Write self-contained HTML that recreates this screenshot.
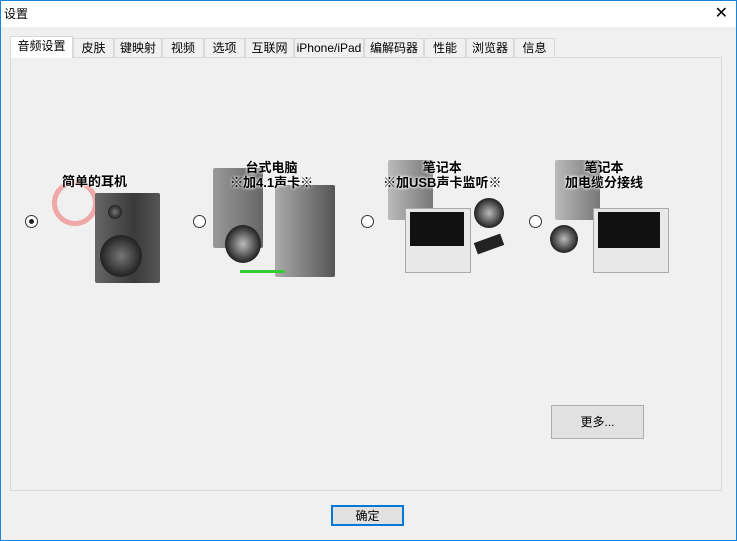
<!DOCTYPE html>
<html><head><meta charset="utf-8"><style>
body{margin:0;width:737px;height:541px;background:#f0f0f0;font-family:"Liberation Sans","Noto Sans CJK SC",sans-serif;font-size:12px;position:relative;overflow:hidden}
.title{position:absolute;left:0;top:0;width:737px;height:27px;background:#fff}
.title span{position:absolute;left:4px;top:5px;font-size:12px}
.close{position:absolute;right:9px;top:3px;font-size:16px}
.border{position:absolute;left:0;top:0;width:735px;height:539px;border:1px solid #1883d7;border-top:1px solid #1883d7;pointer-events:none}
.tab{position:absolute;top:38px;height:19px;border:1px solid #d9d9d9;border-bottom:none;background:#f0f0f0;line-height:19px;text-align:center;box-sizing:border-box;font-size:12px;color:#000}
.tab.sel{top:36px;height:22px;background:#fff;border-color:#d9d9d9;z-index:2}
.panel{position:absolute;left:10px;top:57px;width:712px;height:434px;border:1px solid #d9d9d9;box-sizing:border-box;background:#f0f0f0}
.radio{position:absolute;width:11px;height:11px;border:1px solid #333;border-radius:50%;background:#fff}
.radio.on::after{content:"";position:absolute;left:3px;top:3px;width:5px;height:5px;border-radius:50%;background:#222}
.img{position:absolute}
.spk{position:absolute;background:linear-gradient(90deg,#666,#3a3a3a 60%,#555);border-radius:2px}
.woof{position:absolute;border-radius:50%;background:radial-gradient(#777,#222 70%)}
.lbl{position:absolute;font-weight:bold;font-size:13px;text-align:center;color:#000;text-shadow:0 0 3px #fff,0 0 3px #fff;white-space:nowrap}
.lap{position:absolute;background:#e8e8e8;border:1px solid #aaa}
.scr{position:absolute;background:#111}
.btn{position:absolute;border:1px solid #adadad;background:#e1e1e1;text-align:center;box-sizing:border-box}
</style></head><body>
<div class="title"><span>设置</span><div class="close">✕</div></div>
<div class="tab sel" style="left:10px;width:63px">音频设置</div>
<div class="tab" style="left:73px;width:41px">皮肤</div>
<div class="tab" style="left:114px;width:48px">键映射</div>
<div class="tab" style="left:162px;width:42px">视频</div>
<div class="tab" style="left:204px;width:41px">选项</div>
<div class="tab" style="left:245px;width:49px">互联网</div>
<div class="tab" style="left:294px;width:70px">iPhone/iPad</div>
<div class="tab" style="left:364px;width:60px">编解码器</div>
<div class="tab" style="left:424px;width:42px">性能</div>
<div class="tab" style="left:466px;width:48px">浏览器</div>
<div class="tab" style="left:514px;width:41px">信息</div>
<div class="panel"></div>

<div class="radio on" style="left:25px;top:215px"></div>
<div class="radio" style="left:193px;top:215px"></div>
<div class="radio" style="left:361px;top:215px"></div>
<div class="radio" style="left:529px;top:215px"></div>

<!-- image 1 -->
<div style="position:absolute;left:52px;top:180px;width:36px;height:36px;border:5px solid #e88;border-radius:50%;opacity:.7"></div>
<div class="spk" style="left:95px;top:193px;width:65px;height:90px"></div>
<div class="woof" style="left:100px;top:235px;width:42px;height:42px"></div>
<div class="woof" style="left:108px;top:205px;width:14px;height:14px"></div>
<div class="lbl" style="left:62px;top:171px">简单的耳机</div>

<!-- image 2 -->
<div class="spk" style="left:213px;top:168px;width:50px;height:80px;background:linear-gradient(90deg,#999,#666)"></div>
<div class="spk" style="left:275px;top:185px;width:60px;height:92px;background:linear-gradient(90deg,#aaa,#555)"></div>
<div class="woof" style="left:225px;top:225px;width:36px;height:38px;background:radial-gradient(#bbb,#222 70%)"></div>
<div style="position:absolute;left:240px;top:270px;width:45px;height:3px;background:#3c3"></div>
<div class="lbl" style="left:230px;top:160px;line-height:15px">台式电脑<br>※加4.1声卡※</div>

<!-- image 3 -->
<div class="spk" style="left:388px;top:160px;width:45px;height:60px;background:linear-gradient(90deg,#bbb,#777)"></div>
<div class="lap" style="left:405px;top:208px;width:64px;height:63px"></div>
<div class="scr" style="left:410px;top:212px;width:54px;height:34px"></div>
<div class="woof" style="left:474px;top:198px;width:30px;height:30px;background:radial-gradient(#bbb,#222 70%)"></div>
<div style="position:absolute;left:475px;top:238px;width:28px;height:12px;background:#222;transform:rotate(-20deg)"></div>
<div class="lbl" style="left:383px;top:160px;line-height:15px">笔记本<br>※加USB声卡监听※</div>

<!-- image 4 -->
<div class="spk" style="left:555px;top:160px;width:45px;height:60px;background:linear-gradient(90deg,#bbb,#777)"></div>
<div class="lap" style="left:593px;top:208px;width:74px;height:63px"></div>
<div class="scr" style="left:598px;top:212px;width:62px;height:36px"></div>
<div class="woof" style="left:550px;top:225px;width:28px;height:28px;background:radial-gradient(#bbb,#222 70%)"></div>
<div class="lbl" style="left:565px;top:160px;line-height:15px">笔记本<br>加电缆分接线</div>

<div class="btn" style="left:551px;top:405px;width:93px;height:34px;line-height:32px">更多...</div>
<div class="btn" style="left:331px;top:505px;width:73px;height:21px;line-height:18px;border:2px solid #0078d7">确定</div>
<div class="border"></div>
</body></html>
